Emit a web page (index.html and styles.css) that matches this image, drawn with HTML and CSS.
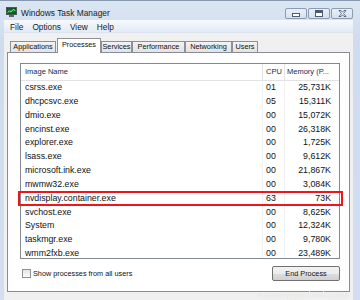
FILE: index.html
```html
<!DOCTYPE html>
<html>
<head>
<meta charset="utf-8">
<link rel="stylesheet" href="styles.css">
</head>
<body>
<div class="window">
  <div class="titlebar">
    <svg class="app-icon" width="11" height="10" viewBox="0 0 11 10">
      <rect x="0.5" y="0.5" width="10" height="7" fill="#24302a" stroke="#4d5a52"/>
      <rect x="1.5" y="1.5" width="8" height="5" fill="#0f6b2c"/>
      <polyline points="1.5,5.5 3.5,4 5,5 7,2.5 9.5,3.5" fill="none" stroke="#7cf07c" stroke-width="1"/>
      <rect x="3" y="8" width="5" height="2" fill="#5b6670"/>
    </svg>
    <span class="title">Windows Task Manager</span>
    <div class="caption">
      <span class="cbtn"><svg width="8" height="4" viewBox="0 0 8 4"><rect x="0.5" y="0.5" width="7" height="3" fill="#fff" stroke="#4a5b73"/></svg></span>
      <span class="cbtn"><svg width="8" height="7" viewBox="0 0 8 7"><rect x="0.5" y="0.5" width="7" height="6" fill="#fff" stroke="#4a5b73"/><rect x="1" y="1" width="6" height="2" fill="#4a5b73"/></svg></span>
      <span class="cbtn"><svg width="9" height="7" viewBox="0 0 9 7"><path d="M1 0.5h2l1.5 1.7 1.5-1.7h2l-2.5 3 2.5 3h-2l-1.5-1.7-1.5 1.7h-2l2.5-3z" fill="#fff" stroke="#4a5b73" stroke-width="0.9" stroke-linejoin="round"/></svg></span>
    </div>
  </div>
  <div class="client">
    <div class="menubar">
      <span>File</span><span>Options</span><span>View</span><span>Help</span>
    </div>
    <div class="tabs">
      <span class="tab t-app">Applications</span>
      <span class="tab t-proc active">Processes</span>
      <span class="tab t-serv">Services</span>
      <span class="tab t-perf">Performance</span>
      <span class="tab t-net">Networking</span>
      <span class="tab t-users">Users</span>
    </div>
    <div class="panel">
      <div class="list-wrap">
        <div class="list">
          <div class="row head"><span class="c-name">Image Name</span><span class="c-cpu">CPU</span><span class="c-mem">Memory (P...</span></div>
          <div class="row"><span class="c-name">csrss.exe</span><span class="c-cpu">01</span><span class="c-mem">25,731K</span></div>
          <div class="row"><span class="c-name">dhcpcsvc.exe</span><span class="c-cpu">05</span><span class="c-mem">15,311K</span></div>
          <div class="row"><span class="c-name">dmio.exe</span><span class="c-cpu">00</span><span class="c-mem">15,072K</span></div>
          <div class="row"><span class="c-name">encinst.exe</span><span class="c-cpu">00</span><span class="c-mem">26,318K</span></div>
          <div class="row"><span class="c-name">explorer.exe</span><span class="c-cpu">00</span><span class="c-mem">1,725K</span></div>
          <div class="row"><span class="c-name">lsass.exe</span><span class="c-cpu">00</span><span class="c-mem">9,612K</span></div>
          <div class="row"><span class="c-name">microsoft.ink.exe</span><span class="c-cpu">00</span><span class="c-mem">21,867K</span></div>
          <div class="row"><span class="c-name">mwmw32.exe</span><span class="c-cpu">00</span><span class="c-mem">3,084K</span></div>
          <div class="row"><span class="c-name">nvdisplay.container.exe</span><span class="c-cpu">63</span><span class="c-mem">73K</span></div>
          <div class="row"><span class="c-name">svchost.exe</span><span class="c-cpu">00</span><span class="c-mem">8,625K</span></div>
          <div class="row"><span class="c-name">System</span><span class="c-cpu">00</span><span class="c-mem">12,324K</span></div>
          <div class="row"><span class="c-name">taskmgr.exe</span><span class="c-cpu">00</span><span class="c-mem">9,780K</span></div>
          <div class="row"><span class="c-name">wmm2fxb.exe</span><span class="c-cpu">00</span><span class="c-mem">23,489K</span></div>
        </div>
        <div class="highlight"></div>
      </div>
      <div class="footer">
        <span class="check"><span class="box"></span>Show processes from all users</span>
        <span class="btn">End Process</span>
      </div>
    </div>
    <div class="watermark">www.mygoodtools.com</div>
  </div>
</div>
</body>
</html>
```
FILE: styles.css
```css
* { box-sizing: border-box; }
html, body { margin: 0; padding: 0; }
body {
  width: 360px;
  height: 300px;
  overflow: hidden;
  font-family: "Liberation Sans", Arial, sans-serif;
  color: #111;
  background: #d4e0f0;
}
.window {
  width: 360px;
  height: 300px;
  display: flex;
  flex-direction: column;
  background: linear-gradient(#dbe6f3, #cfdcee 40px, #d3dff0);
  border-top: 1px solid #8798b0;
}
.titlebar {
  height: 19px;
  display: flex;
  align-items: flex-start;
  flex: none;
}
.app-icon { margin: 6px 0 0 6px; flex: none; }
.title {
  margin: 6px 0 0 4px;
  font-size: 8.4px;
  line-height: 12px;
  color: #1a1a1a;
}
.caption {
  margin: 7px 7px 0 auto;
  display: flex;
  gap: 1px;
}
.cbtn {
  width: 22px;
  height: 11px;
  border: 1px solid #8a9cb4;
  border-radius: 2px;
  background: linear-gradient(#e9eff7, #d6e0ec);
  display: flex;
  align-items: center;
  justify-content: center;
}
.cbtn:first-child svg { margin-top: 2px; }
.client {
  flex: 1;
  margin: 0 7px 0 4px;
  background: #f0f0f0;
  display: flex;
  flex-direction: column;
}
.menubar {
  height: 13px;
  display: flex;
  gap: 9px;
  padding: 1px 0 0 6px;
  font-size: 8.3px;
  line-height: 12px;
  color: #1a1a1a;
  background: linear-gradient(#f6f9fd, #e2eaf5);
  border-bottom: 1px solid #dbe3ee;
  flex: none;
}
.tabs {
  height: 19px;
  display: flex;
  align-items: flex-end;
  padding-left: 6px;
  flex: none;
}
.tab {
  height: 11px;
  border: 1px solid #8e9094;
  border-bottom: none;
  background: linear-gradient(#f3f3f3, #e3e3e3);
  font-size: 7.3px;
  line-height: 10px;
  text-align: center;
  color: #111;
  white-space: nowrap;
}
.tab.active {
  height: 15px;
  line-height: 12px;
  background: #fff;
  margin-bottom: -1px;
  position: relative;
  z-index: 1;
}
.t-app { width: 46px; }
.t-proc { width: 44px; margin-left: 1px; }
.t-serv { width: 31px; }
.t-perf { width: 53px; }
.t-net { width: 47px; }
.t-users { width: 26px; }
.panel {
  height: 240px;
  margin: 0 3px;
  border: 1px solid #898c95;
  background: #fff;
  padding: 10px 9px 0 12px;
  flex: none;
}
.list-wrap { position: relative; }
.list {
  height: 196px;
  border: 1px solid #828790;
  overflow: hidden;
  background: #fff;
}
.row {
  display: grid;
  grid-template-columns: 241px 22px 1fr;
  height: 13.85px;
  line-height: 13.85px;
  font-size: 8.8px;
  color: #111;
  white-space: nowrap;
}
.row .c-name { padding-left: 4px; }
.row .c-cpu { padding-left: 3px; border-left: 1px solid #f1f1f1; }
.row .c-mem { text-align: right; padding-right: 8px; border-left: 1px solid #f1f1f1; }
.row.head {
  height: 17px;
  line-height: 16px;
  font-size: 7.5px;
  color: #1c2b45;
  border-bottom: 1px solid #e2e2e2;
}
.row.head .c-cpu { border-left-color: #e2e4e8; padding-left: 3px; }
.row.head .c-mem { border-left-color: #e2e4e8; text-align: left; padding-left: 2px; padding-right: 0; }
.highlight {
  position: absolute;
  top: 128px;
  left: -2px;
  width: 325px;
  height: 15px;
  border: 2px solid #f0151b;
}
.footer {
  margin-top: 7px;
  display: flex;
  align-items: center;
  justify-content: space-between;
  padding-left: 2px;
}
.check {
  display: flex;
  align-items: center;
  font-size: 7.3px;
  color: #111;
}
.box {
  width: 9px;
  height: 9px;
  border: 1px solid #8f8f8f;
  background: linear-gradient(#e6e6e6, #fbfbfb);
  margin-right: 2px;
}
.btn {
  width: 68px;
  height: 15px;
  border: 1px solid #707070;
  border-radius: 2px;
  background: linear-gradient(#f3f3f3, #ebebeb 50%, #dddddd 51%, #d0d0d0);
  font-size: 7.3px;
  line-height: 13px;
  text-align: center;
  color: #111;
}
.watermark {
  font-size: 8.8px;
  line-height: 8px;
  text-align: right;
  padding-right: 5px;
  margin-top: -1px;
  color: #fbfbfb;
  text-shadow: 0 0 1px rgba(0,0,0,0.18);
}
```
